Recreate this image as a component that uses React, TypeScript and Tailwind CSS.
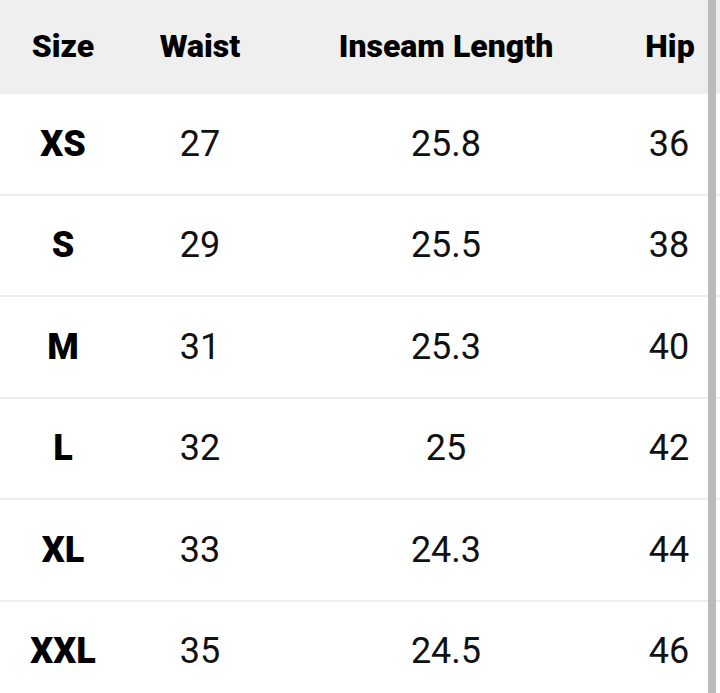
import React from "react";

const rows = [
  ["XS", "27", "25.8", "36"],
  ["S", "29", "25.5", "38"],
  ["M", "31", "25.3", "40"],
  ["L", "32", "25", "42"],
  ["XL", "33", "24.3", "44"],
  ["XXL", "35", "24.5", "46"],
];

const cols = "grid grid-cols-[126px_148px_344px_102px]";

export default function App() {
  return (
    <div
      className="relative w-[720px] h-[693px] overflow-hidden bg-white text-black"
      style={{ fontFamily: "Roboto, 'Liberation Sans', sans-serif" }}
    >
      <div className={`${cols} h-[94px] bg-[#efefef] items-center text-[32px] font-black pb-[3px]`}>
        <div className="text-center">Size</div>
        <div className="text-center">Waist</div>
        <div className="text-center">Inseam Length</div>
        <div className="text-center pl-[2px]">Hip</div>
      </div>
      {rows.map((r) => (
        <div
          key={r[0]}
          className={`${cols} h-[101.5px] border-b-2 border-[#eeeeee] items-center text-[36px] text-[#111]`}
        >
          <div className="text-center font-black text-black">{r[0]}</div>
          <div className="text-center">{r[1]}</div>
          <div className="text-center">{r[2]}</div>
          <div className="text-center">{r[3]}</div>
        </div>
      ))}
      <div className="absolute top-0 bottom-0 left-[708px] w-[8px] bg-[#bbbbbb]" />
    </div>
  );
}
